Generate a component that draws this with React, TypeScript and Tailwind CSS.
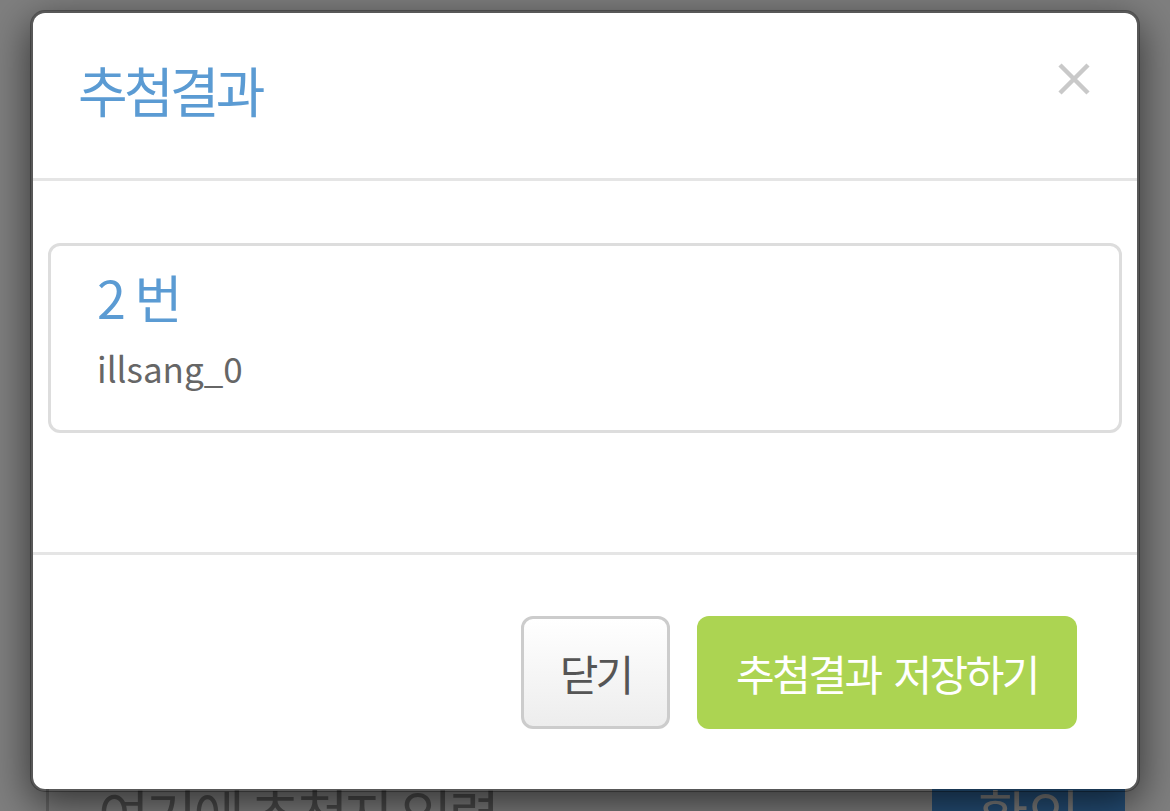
import React from "react";

const font = { fontFamily: '"Noto Sans CJK KR", "Noto Sans", sans-serif' };

function CloseIcon() {
  return (
    <svg width="32" height="32" viewBox="0 0 32 32" fill="none">
      <path d="M2 2 L30 30 M30 2 L2 30" stroke="#c9c9c9" strokeWidth="4.5" />
    </svg>
  );
}

export default function App() {
  return (
    <div className="relative h-[811px] w-full overflow-hidden bg-white" style={font}>
      {/* page behind the dialog: winner input group */}
      <div className="flex items-start pl-[46px] pr-[45px] pt-[738px]">
        <div className="flex h-[150px] flex-1 items-center border-[3px] border-r-0 border-[#cccccc] pl-[49px] text-[56px] tracking-[-0.07em] text-[#999999]">
          여기에 추첨자 입력
        </div>
        <div className="flex h-[150px] w-[193px] items-center justify-center bg-[#4a9ff0] text-[56px] text-white">
          확인
        </div>
      </div>

      {/* backdrop */}
      <div className="absolute inset-0 bg-black/50" />

      {/* dialog */}
      <div className="absolute left-[30px] top-[10px] w-[1110px] overflow-hidden rounded-[15px] border-[3px] border-black/30 bg-white bg-clip-padding shadow-[0_12px_40px_rgba(0,0,0,0.6)]">
        <div className="flex h-[168px] items-start justify-between border-b-[3px] border-[#e5e5e5] pl-[45px] pr-[47px]">
          <h4 className="mt-[47px] text-[54px] leading-[60px] tracking-[-0.07em] text-[#5b9bd3]">추첨결과</h4>
          <button className="mt-[50px]">
            <CloseIcon />
          </button>
        </div>

        <div className="border-b-[3px] border-[#e5e5e5] px-[15px] pb-[119px] pt-[62px]">
          <div className="rounded-[12px] border-[3px] border-[#dddddd] pb-[32px] pl-[46px] pt-[21px]">
            <div className="text-[52px] leading-[60px] tracking-[-0.03em] text-[#5b9bd3]">2 번</div>
            <div className="mt-[11px] text-[35px] leading-[60px] text-[#666666]">illsang_0</div>
          </div>
        </div>

        <div className="flex justify-end gap-[27px] px-[60px] pb-[60px] pt-[61px]">
          <button className="h-[113px] w-[149px] rounded-[12px] border-[3px] border-[#cccccc] bg-gradient-to-b from-white to-[#ededed] text-[42px] tracking-[-0.07em] text-[#555555]">
            닫기
          </button>
          <button className="h-[113px] w-[380px] rounded-[12px] bg-[#acd452] text-[42px] tracking-[-0.06em] text-white [word-spacing:6px]">
            추첨결과 저장하기
          </button>
        </div>
      </div>
    </div>
  );
}
